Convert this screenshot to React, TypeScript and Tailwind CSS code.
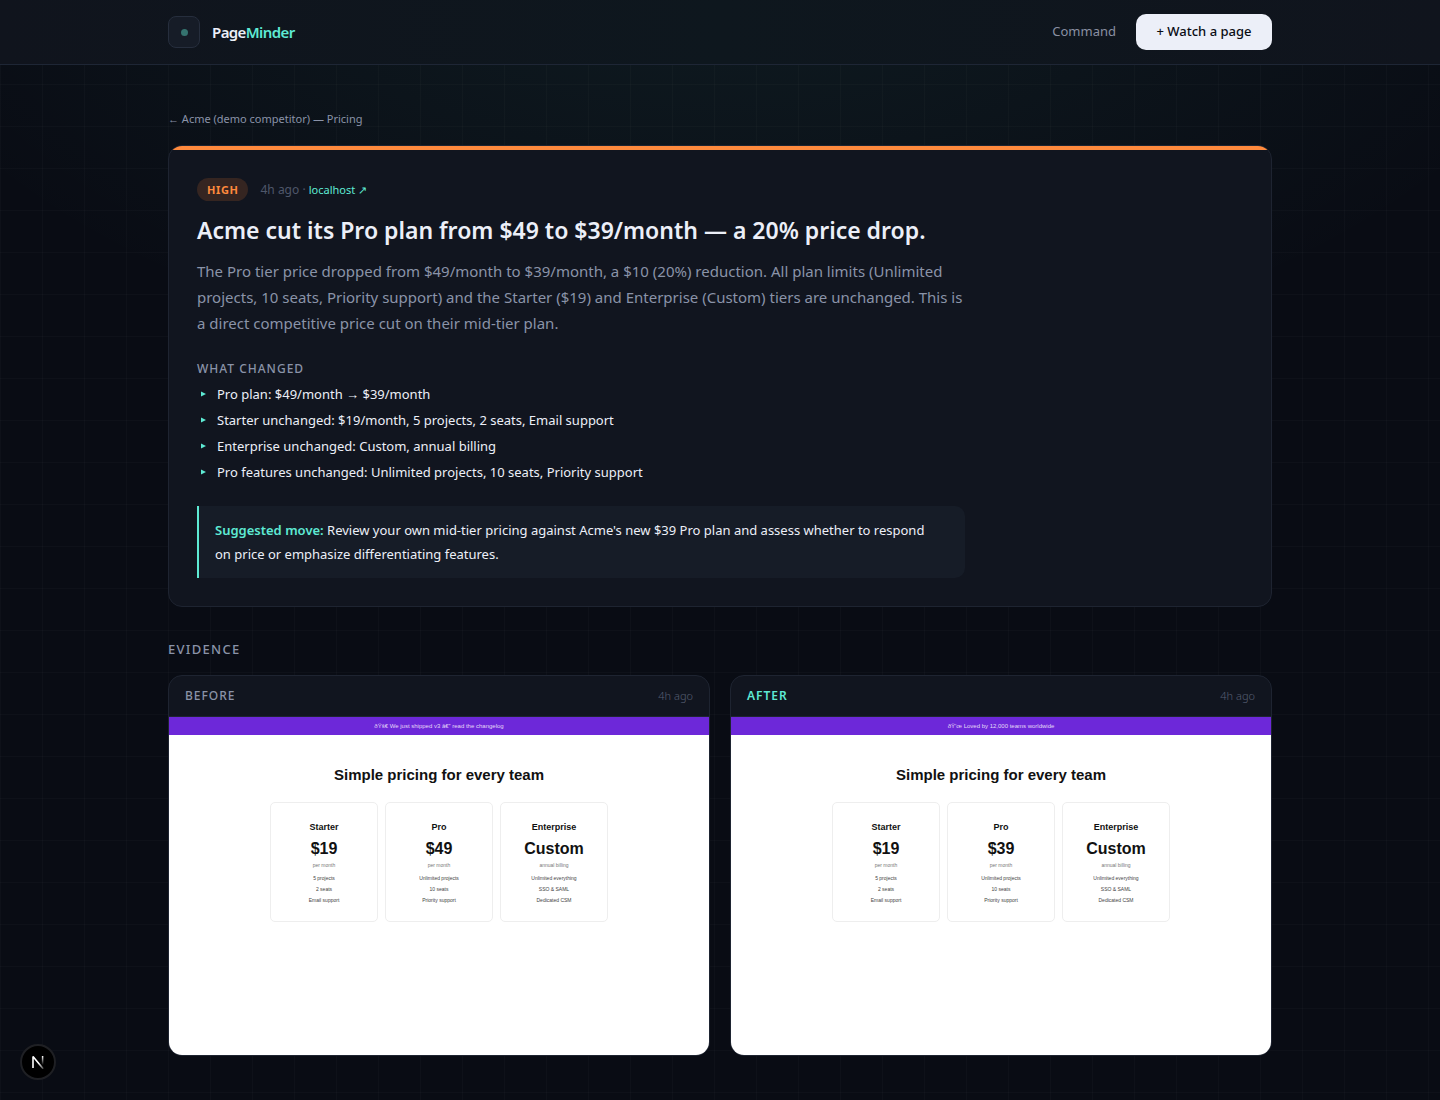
import React from "react";

type Plan = { name: string; price: string; note: string; features: string[] };

const plans = (proPrice: string): Plan[] => [
  { name: "Starter", price: "$19", note: "per month", features: ["5 projects", "2 seats", "Email support"] },
  { name: "Pro", price: proPrice, note: "per month", features: ["Unlimited projects", "10 seats", "Priority support"] },
  { name: "Enterprise", price: "Custom", note: "annual billing", features: ["Unlimited everything", "SSO & SAML", "Dedicated CSM"] },
];

const changes = [
  "Pro plan: $49/month → $39/month",
  "Starter unchanged: $19/month, 5 projects, 2 seats, Email support",
  "Enterprise unchanged: Custom, annual billing",
  "Pro features unchanged: Unlimited projects, 10 seats, Priority support",
];

function Snapshot({ banner, proPrice }: { banner: string; proPrice: string }) {
  return (
    <div className="aspect-[16/10] bg-white text-center font-['Liberation_Sans',sans-serif] text-[#111111]">
      <div className="h-[18px] bg-[#6d28d9] text-[6px] leading-[18px] text-[#e4d8f8]">{banner}</div>
      <h3 className="mt-[31px] text-[15px] font-bold leading-[18px]">Simple pricing for every team</h3>
      <div className="mx-auto mt-[18px] flex w-[338px] max-w-full gap-[7px]">
        {plans(proPrice).map((p) => (
          <div key={p.name} className="h-[120px] flex-1 rounded-[5px] border border-[#eeeeee] pt-[18px]">
            <h4 className="text-[9px] font-bold leading-3">{p.name}</h4>
            <p className="mt-[6px] text-[16px] font-bold leading-5">{p.price}</p>
            <p className="mt-[2px] text-[5px] leading-2 text-[#777777]">{p.note}</p>
            <ul className="mt-[4px] text-[5px] text-[#444444]">
              {p.features.map((f) => (
                <li key={f} className="h-[11px] leading-[11px]">{f}</li>
              ))}
            </ul>
          </div>
        ))}
      </div>
    </div>
  );
}

function EvidenceCard(props: { label: string; accent?: boolean; banner: string; proPrice: string }) {
  return (
    <article className="overflow-hidden rounded-[14px] border border-[#1e2431] bg-[#11151f]">
      <header className="flex h-[41px] items-center justify-between border-b border-[#1e2431] px-4 text-[12px]">
        <h3 className={props.accent ? "font-semibold tracking-[1px] text-[#5eead4]" : "font-medium tracking-[1px] text-[#8a93a8]"}>
          {props.label}
        </h3>
        <span className="text-[11px] font-light text-[#565e72]">4h ago</span>
      </header>
      <Snapshot banner={props.banner} proPrice={props.proPrice} />
    </article>
  );
}

export default function App() {
  return (
    <div className="relative min-h-screen bg-[#090c14] bg-[linear-gradient(rgba(255,255,255,0.02)_1px,transparent_1px),linear-gradient(90deg,rgba(255,255,255,0.02)_1px,transparent_1px),radial-gradient(900px_500px_at_50%_-10%,rgba(94,234,212,0.08),transparent_100%)] bg-[size:42px_42px,42px_42px,100%_100%] font-['Noto_Sans',sans-serif] text-[#eceff8]">
      <header className="border-b border-[#1e2635] bg-[linear-gradient(90deg,#10141d,#0e171e_50%,#10141d)]">
        <div className="mx-auto flex h-16 max-w-[1152px] items-center justify-between px-6">
          <a href="#" className="flex items-center gap-3 text-[15px] font-semibold tracking-[-0.6px]">
            <span className="flex size-8 items-center justify-center rounded-lg border border-[#262e3d] bg-[#161c27]">
              <span className="size-[7px] rounded-full bg-[#35736f]" />
            </span>
            <span>Page<span className="text-[#5eead4]">Minder</span></span>
          </a>
          <nav className="flex items-center gap-5">
            <a href="#" className="text-[13px] text-[#8a90a2]">Command</a>
            <button className="h-9 w-[136px] rounded-[10px] bg-[#eceff8] text-[13px] font-medium text-[#0a0d14]">+ Watch a page</button>
          </nav>
        </div>
      </header>

      <main className="mx-auto max-w-[1152px] px-6 pb-11 pt-11">
        <a href="#" className="block text-[11px] leading-5 text-[#8a93a8]">← Acme (demo competitor) — Pricing</a>

        <section className="mt-4 overflow-hidden rounded-[14px] border border-[#1e2431] bg-[#11151f]">
          <div className="h-1 bg-[#ff8a3d]" />
          <div className="p-7">
            <div className="flex h-[23px] items-center gap-3 text-[12px]">
              <span className="rounded-full bg-[#352521] px-[10px] text-[11px] font-bold leading-[23px] tracking-[0.6px] text-[#ff8a3d]">HIGH</span>
              <span className="text-[#4f576a]">4h ago · <a href="#" className="text-[11px] text-[#5eead4]">localhost ↗</a></span>
            </div>
            <h1 className="mt-[13px] text-[23px] font-semibold leading-8">
              Acme cut its Pro plan from $49 to $39/month — a 20% price drop.
            </h1>
            <p className="mt-3 max-w-[768px] text-[15px] leading-[26px] text-[#8a93a8]">
              The Pro tier price dropped from $49/month to $39/month, a $10 (20%) reduction. All plan limits (Unlimited projects, 10 seats, Priority support) and the Starter ($19) and Enterprise (Custom) tiers are unchanged. This is a direct competitive price cut on their mid-tier plan.
            </p>
            <h2 className="mt-6 text-[12px] font-medium leading-[18px] tracking-[1px] text-[#8a93a8]">WHAT CHANGED</h2>
            <ul className="mt-[3px] text-[13px] leading-[26px]">
              {changes.map((c) => (
                <li key={c} className="flex items-center">
                  <svg viewBox="0 0 20 26" className="h-[26px] w-5 shrink-0 fill-[#5eead4]"><path d="M4 10.5v5l5-2.5z" /></svg>
                  {c}
                </li>
              ))}
            </ul>
            <p className="mt-[21px] max-w-[768px] rounded-r-[10px] border-l-2 border-[#5eead4] bg-[#161c27] py-3 pl-4 pr-7 text-[13px] leading-6">
              <strong className="font-semibold text-[#5eead4]">Suggested move:</strong> Review your own mid-tier pricing against Acme's new $39 Pro plan and assess whether to respond on price or emphasize differentiating features.
            </p>
          </div>
        </section>

        <h2 className="mt-8 text-[13px] font-medium leading-5 tracking-[1.3px] text-[#8a93a8]">EVIDENCE</h2>
        <div className="mt-4 grid grid-cols-2 gap-5">
          <EvidenceCard label="BEFORE" banner="ðŸš€ We just shipped v3 â€” read the changelog" proPrice="$49" />
          <EvidenceCard label="AFTER" accent banner="ðŸ’œ Loved by 12,000 teams worldwide" proPrice="$39" />
        </div>
      </main>

      <button aria-label="Open developer tools" className="fixed bottom-5 left-5 flex size-9 items-center justify-center rounded-full border-2 border-[#1f2024] bg-black">
        <svg viewBox="0 0 14 14" className="size-[14px]" fill="none">
          <defs>
            <linearGradient id="stem" x1="0" y1="1" x2="0" y2="10" gradientUnits="userSpaceOnUse"><stop stopColor="#fff" /><stop offset="1" stopColor="#fff" stopOpacity="0" /></linearGradient>
            <linearGradient id="diag" x1="8" y1="8" x2="13" y2="14" gradientUnits="userSpaceOnUse"><stop stopColor="#fff" /><stop offset="1" stopColor="#fff" stopOpacity="0.2" /></linearGradient>
          </defs>
          <path d="M2 13V1.5L12.2 13.8" stroke="url(#diag)" strokeWidth="1.6" strokeLinejoin="bevel" />
          <path d="M11.6 1v9" stroke="url(#stem)" strokeWidth="1.5" />
        </svg>
      </button>
    </div>
  );
}
